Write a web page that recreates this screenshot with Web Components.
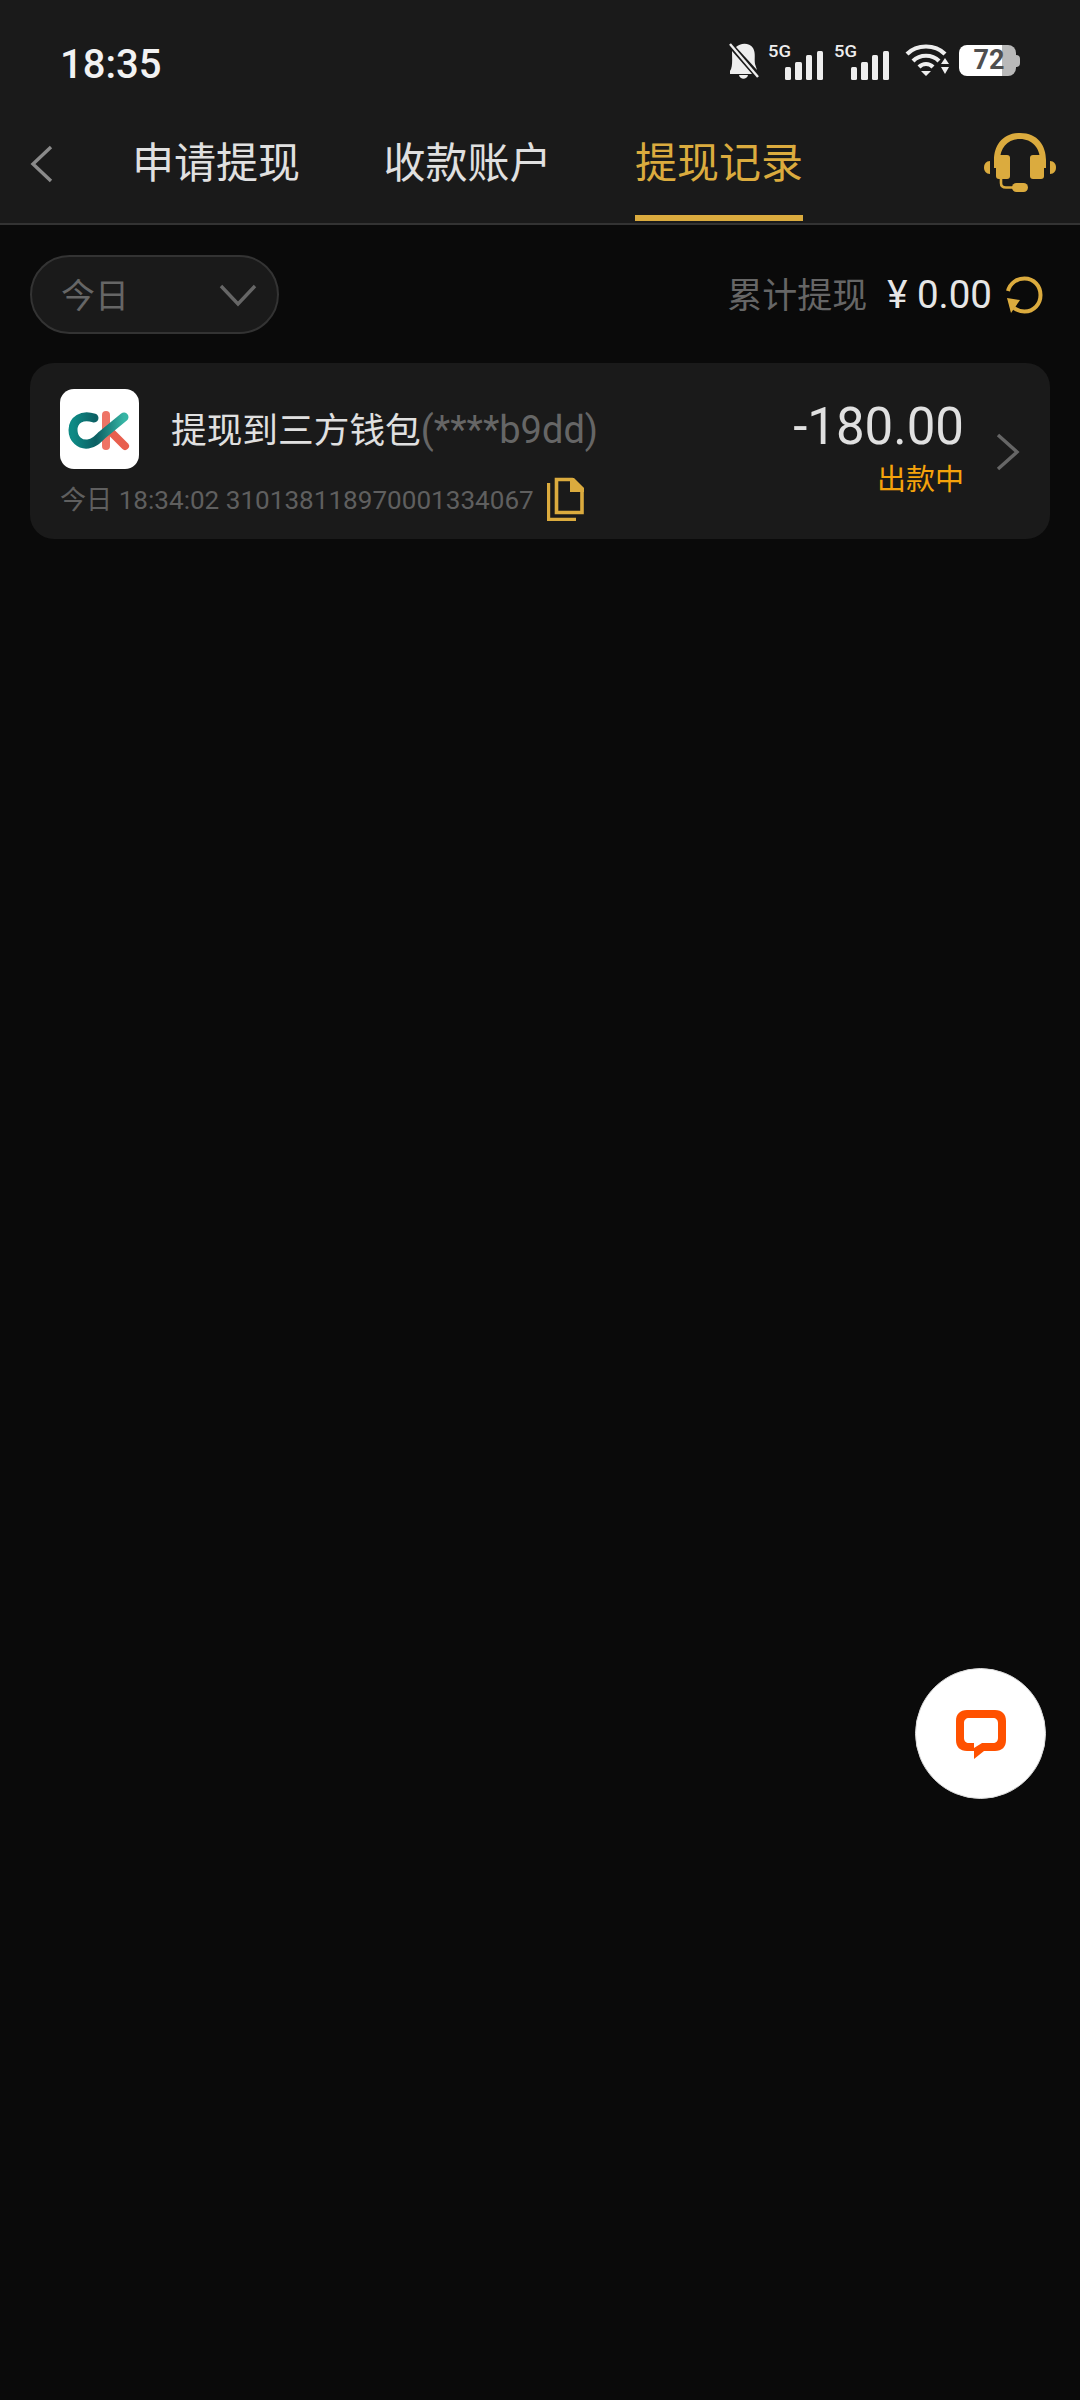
<!DOCTYPE html>
<html lang="zh">
<head>
<meta charset="utf-8">
<title>提现记录</title>
<style>
    html, body {
        margin: 0;
        padding: 0;
        background: #0a0a0a;
    }

    body {
        width: 1080px;
        height: 2400px;
        position: relative;
        font-family: Roboto, "Noto Sans CJK SC", sans-serif;
    }
</style>
</head>
<body>
    <status-bar></status-bar>
    <nav-tabs></nav-tabs>
    <filter-row></filter-row>
    <record-card
        title-text="提现到三方钱包"
        account="(****b9dd)"
        meta="今日 18:34:02 310138118970001334067"
        amount="-180.00"
        state="出款中"></record-card>
    <chat-fab></chat-fab>

<script>
    class SignalBars extends HTMLElement {
        constructor() {
            super();
            this.attachShadow({ mode: "open" });
        }

        connectedCallback() {
            this.shadowRoot.innerHTML = `
                <style>
                    :host { display: block; width: 56px; height: 40px; }
                    svg { display: block; }
                    text { font: 500 17px Roboto, sans-serif; fill: #eee; }
                </style>
                <svg width="56" height="40" viewBox="0 0 56 40">
                    <text x="0" y="15" textLength="23" lengthAdjust="spacingAndGlyphs">5G</text>
                    <g fill="#eee">
                        <rect x="17" y="25" width="6" height="13" rx="1.5"/>
                        <rect x="27" y="20" width="7" height="18" rx="1.5"/>
                        <rect x="38" y="13" width="6" height="25" rx="1.5"/>
                        <rect x="49" y="9" width="6" height="29" rx="1.5"/>
                    </g>
                </svg>
            `;
        }
    }

    customElements.define("signal-bars", SignalBars);

    class StatusBar extends HTMLElement {
        constructor() {
            super();
            this.attachShadow({ mode: "open" });
        }

        connectedCallback() {
            this.shadowRoot.innerHTML = `
                <style>
                    :host {
                        display: flex;
                        align-items: center;
                        justify-content: space-between;
                        height: 118px;
                        padding: 0 60px 0 60px;
                        box-sizing: border-box;
                        background: #1a1a1a;
                    }
                    .time {
                        font: 500 40px Roboto, sans-serif;
                        color: #f2f2f2;
                        margin-top: 10px;
                    }
                    .icons {
                        display: flex;
                        align-items: flex-start;
                        margin-top: 6px;
                    }
                    svg { display: block; }
                    .bell { margin-top: 1px; margin-right: 9px; }
                    .sim2 { margin-left: 10px; }
                    .wifi { margin-left: 15px; margin-top: 1px; }
                    .battery {
                        margin-left: 9px;
                        margin-top: 3px;
                        display: flex;
                        align-items: center;
                    }
                    .cell {
                        width: 57px;
                        height: 31px;
                        border-radius: 8px;
                        background: linear-gradient(90deg, #fff 0 43px, #b9b9b9 43px);
                        color: #4f4f4f;
                        font: 700 27px Roboto, sans-serif;
                        line-height: 31px;
                        text-align: center;
                        padding-left: 3px;
                        box-sizing: border-box;
                    }
                    .nub {
                        width: 4px;
                        height: 12px;
                        background: #b9b9b9;
                        border-radius: 0 4px 4px 0;
                    }
                </style>
                <span class="time">18:35</span>
                <div class="icons">
                    <svg class="bell" width="30" height="36" viewBox="0 0 30 36">
                        <path d="M7 4 C11 0 20 -1 24 5 C27 10 25 16 26 21 L28 27 Z M3 8 L23 31 L1 31 L1 28 C4 24 3 15 3 8 Z M10 32 L19 32 C18 37 11 37 10 32 Z" fill="#eee"/>
                        <path d="M1 1 L29 34" stroke="#eee" stroke-width="2.4"/>
                    </svg>
                    <signal-bars></signal-bars>
                    <signal-bars class="sim2"></signal-bars>
                    <svg class="wifi" width="45" height="34" viewBox="0 0 45 34">
                        <g fill="none" stroke="#eee" stroke-width="4.2">
                            <path d="M2 11 C12 1 30 1 40 11"/>
                            <path d="M8 18 C15 11 27 11 34 18"/>
                            <path d="M14 24 C18 20 24 20 28 24"/>
                        </g>
                        <path d="M16 28 L26 28 L21 33 Z M36 21 L44 21 L40 15 Z M36 24 L44 24 L40 31 Z" fill="#eee"/>
                    </svg>
                    <div class="battery">
                        <div class="cell">72</div>
                        <div class="nub"></div>
                    </div>
                </div>
            `;
        }
    }

    customElements.define("status-bar", StatusBar);

    class NavTabs extends HTMLElement {
        constructor() {
            super();
            this.attachShadow({ mode: "open" });
        }

        connectedCallback() {
            this.shadowRoot.innerHTML = `
                <style>
                    :host {
                        display: flex;
                        align-items: stretch;
                        height: 107px;
                        box-sizing: border-box;
                        background: #1a1a1a;
                        border-bottom: 2px solid #333;
                        font-family: "Noto Sans CJK SC", sans-serif;
                    }
                    .back {
                        display: block;
                        margin: 26px 0 0 28px;
                    }
                    .tabs {
                        display: flex;
                        gap: 83.5px;
                        margin-left: 76px;
                    }
                    .tab {
                        font-size: 42px;
                        line-height: 54px;
                        padding-top: 15px;
                        color: #e0e0e0;
                        box-sizing: border-box;
                        height: 103px;
                    }
                    .tab.active {
                        color: #dbab3e;
                        border-bottom: 6px solid #dbab3e;
                    }
                    .help {
                        display: block;
                        margin-left: auto;
                        margin-right: 10px;
                        margin-top: 2px;
                    }
                </style>
                <svg class="back" width="28" height="40" viewBox="0 0 28 40">
                    <path d="M23 3 L5 20 L23 37" fill="none" stroke="#8a8a8a" stroke-width="3.4"/>
                </svg>
                <div class="tabs">
                    <div class="tab">申请提现</div>
                    <div class="tab">收款账户</div>
                    <div class="tab active">提现记录</div>
                </div>
                <svg class="help" width="100" height="90" viewBox="0 0 100 90">
                    <g fill="#dbab3e">
                        <path d="M50 13 C32 13 24 26 24 40 L24 48 L30 48 L30 40 C30 28 38 19 50 19 C62 19 70 28 70 40 L70 48 L76 48 L76 40 C76 26 68 13 50 13 Z"/>
                        <rect x="26" y="35" width="14" height="24" rx="3"/>
                        <rect x="60" y="35" width="14" height="24" rx="3"/>
                        <path d="M20 41 L20 54 C16 54 14 51 14 47.5 C14 44 16 41 20 41 Z"/>
                        <path d="M80 41 L80 54 C84 54 86 51 86 47.5 C86 44 84 41 80 41 Z"/>
                        <rect x="42" y="63" width="16" height="9" rx="4.5"/>
                    </g>
                    <path d="M31 59 L31 63 C31 66 33 67.5 36 67.5 L44 67.5" fill="none" stroke="#dbab3e" stroke-width="2.6"/>
                </svg>
            `;
        }
    }

    customElements.define("nav-tabs", NavTabs);

    class FilterRow extends HTMLElement {
        constructor() {
            super();
            this.attachShadow({ mode: "open" });
        }

        connectedCallback() {
            this.shadowRoot.innerHTML = `
                <style>
                    :host {
                        display: flex;
                        align-items: center;
                        justify-content: space-between;
                        padding: 30px 37px 0 30px;
                        font-family: "Noto Sans CJK SC", sans-serif;
                    }
                    .pill {
                        display: flex;
                        align-items: center;
                        justify-content: space-between;
                        width: 249px;
                        height: 79px;
                        box-sizing: border-box;
                        padding: 0 20px 0 29px;
                        background: #1a1a1a;
                        border: 2px solid #333;
                        border-radius: 40px;
                        color: #666;
                        font-size: 34px;
                    }
                    .pill span { margin-top: -3px; }
                    .total {
                        display: flex;
                        align-items: center;
                        color: #666;
                        font-size: 35px;
                    }
                    .total > span:first-child { margin-top: -4px; }
                    .money {
                        margin-left: 20px;
                        margin-right: 13px;
                        color: #e6e6e6;
                        font: 400 38.5px Roboto, "Noto Sans CJK SC", sans-serif;
                    }
                    svg { display: block; }
                </style>
                <div class="pill">
                    <span>今日</span>
                    <svg width="38" height="24" viewBox="0 0 38 24">
                        <path d="M2 3 L19 21 L36 3" fill="none" stroke="#666" stroke-width="3.4"/>
                    </svg>
                </div>
                <div class="total">
                    <span>累计提现</span>
                    <span class="money">¥ 0.00</span>
                    <svg width="38" height="38" viewBox="0 0 38 38">
                        <path d="M3 15 C5 7 12 2.5 19.5 2.5 C29 2.5 35.5 10 35.5 19 C35.5 28 29 35.5 19.5 35.5 C15 35.5 12 34 9 32" fill="none" stroke="#dbab3e" stroke-width="4"/>
                        <path d="M2 22 L15 24 L6 37 Z" fill="#dbab3e"/>
                    </svg>
                </div>
            `;
        }
    }

    customElements.define("filter-row", FilterRow);

    class RecordCard extends HTMLElement {
        constructor() {
            super();
            this.attachShadow({ mode: "open" });
        }

        connectedCallback() {
            this.shadowRoot.innerHTML = `
                <style>
                    :host {
                        display: flex;
                        align-items: flex-start;
                        width: 1020px;
                        height: 176px;
                        margin: 29px 0 0 30px;
                        box-sizing: border-box;
                        padding: 26px 30px 0 30px;
                        background: #1a1a1a;
                        border-radius: 24px;
                        font-family: "Noto Sans CJK SC", sans-serif;
                    }
                    .left { flex: 1; min-width: 0; }
                    .top { display: flex; align-items: center; }
                    .logo {
                        display: block;
                        width: 79px;
                        height: 80px;
                        border-radius: 14px;
                        background: #fff;
                        flex: none;
                    }
                    .title {
                        margin-left: 32px;
                        margin-top: -3px;
                        font-size: 35.7px;
                        color: #e0e0e0;
                        white-space: nowrap;
                    }
                    .account {
                        font-family: Roboto, sans-serif;
                        font-size: 38px;
                        color: #666;
                    }
                    .bottom {
                        display: flex;
                        align-items: center;
                        margin-top: 8px;
                        color: #5f5f5f;
                        font-size: 26.1px;
                        white-space: nowrap;
                    }
                    .meta { font-family: Roboto, "Noto Sans CJK SC", sans-serif; margin-top: -3px; }
                    .copy { display: block; margin-left: 13px; }
                    .right {
                        display: flex;
                        flex-direction: column;
                        align-items: flex-end;
                        margin-top: 6px;
                    }
                    .amount {
                        font: 400 51px/64px Roboto, sans-serif;
                        color: #e0e0e0;
                    }
                    .state {
                        font-size: 29px;
                        line-height: 36px;
                        color: #f5a30b;
                    }
                    .chev { display: block; flex: none; margin: 44px 0 0 32px; }
                </style>
                <div class="left">
                    <div class="top">
                        <svg class="logo" viewBox="0 0 79 80">
                            <defs>
                                <linearGradient id="teal" x1="0" y1="0" x2="1" y2="0">
                                    <stop offset="0" stop-color="#0e8a85"/>
                                    <stop offset="0.45" stop-color="#0c5f63"/>
                                    <stop offset="1" stop-color="#37b5a5"/>
                                </linearGradient>
                            </defs>
                            <path d="M46 26 L46 57" stroke="#ee7466" stroke-width="8" stroke-linecap="round" fill="none"/>
                            <path d="M50 42 L65 57" stroke="#e85f4e" stroke-width="8" stroke-linecap="round" fill="none"/>
                            <path d="M34 29 C22 25 13 31 13 41 C13 50 20 56 28 55 C34 54 37 51 42 46 L64 28" stroke="url(#teal)" stroke-width="9" stroke-linecap="round" fill="none"/>
                        </svg>
                        <div class="title">${this.getAttribute("title-text")}<span class="account">${this.getAttribute("account")}</span></div>
                    </div>
                    <div class="bottom">
                        <span class="meta">${this.getAttribute("meta")}</span>
                        <svg class="copy" width="38" height="44" viewBox="0 0 38 44">
                            <path d="M1.5 6 L1.5 42.5 L29 42.5" fill="none" stroke="#dbab3e" stroke-width="3.4"/>
                            <path d="M9.5 2.5 L25 2.5 L35 12 L35 35.5 L9.5 35.5 Z" fill="none" stroke="#dbab3e" stroke-width="3.6"/>
                            <path d="M23 1 L27 1 L37 11 L37 15 L23 15 Z" fill="#dbab3e"/>
                        </svg>
                    </div>
                </div>
                <div class="right">
                    <div class="amount">${this.getAttribute("amount")}</div>
                    <div class="state">${this.getAttribute("state")}</div>
                </div>
                <svg class="chev" width="24" height="38" viewBox="0 0 24 38">
                    <path d="M2 2 L21 19 L2 36" fill="none" stroke="#666" stroke-width="3.4"/>
                </svg>
            `;
        }
    }

    customElements.define("record-card", RecordCard);

    class ChatFab extends HTMLElement {
        constructor() {
            super();
            this.attachShadow({ mode: "open" });
        }

        connectedCallback() {
            this.shadowRoot.innerHTML = `
                <style>
                    :host {
                        position: absolute;
                        left: 915px;
                        top: 1668px;
                        width: 131px;
                        height: 131px;
                        box-sizing: border-box;
                        border-radius: 50%;
                        background: #fff;
                        border: 1px solid #ddd;
                        display: flex;
                        align-items: center;
                        justify-content: center;
                    }
                    svg { display: block; margin-top: 2px; }
                </style>
                <svg width="50" height="50" viewBox="0 0 50 50">
                    <path d="M11 0 L39 0 C46 0 50 4 50 11 L50 30 C50 37 46 41 39 41 L28 41 L18 49 L18 41 L11 41 C4 41 0 37 0 30 L0 11 C0 4 4 0 11 0 Z M13 8 C10 8 8 10 8 13 L8 28 C8 31 10 33 13 33 L18 33 L18 38 L26 33 L37 33 C40 33 42 31 42 28 L42 13 C42 10 40 8 37 8 Z" fill="#ff5100" fill-rule="evenodd"/>
                </svg>
            `;
        }
    }

    customElements.define("chat-fab", ChatFab);
</script>
</body>
</html>
